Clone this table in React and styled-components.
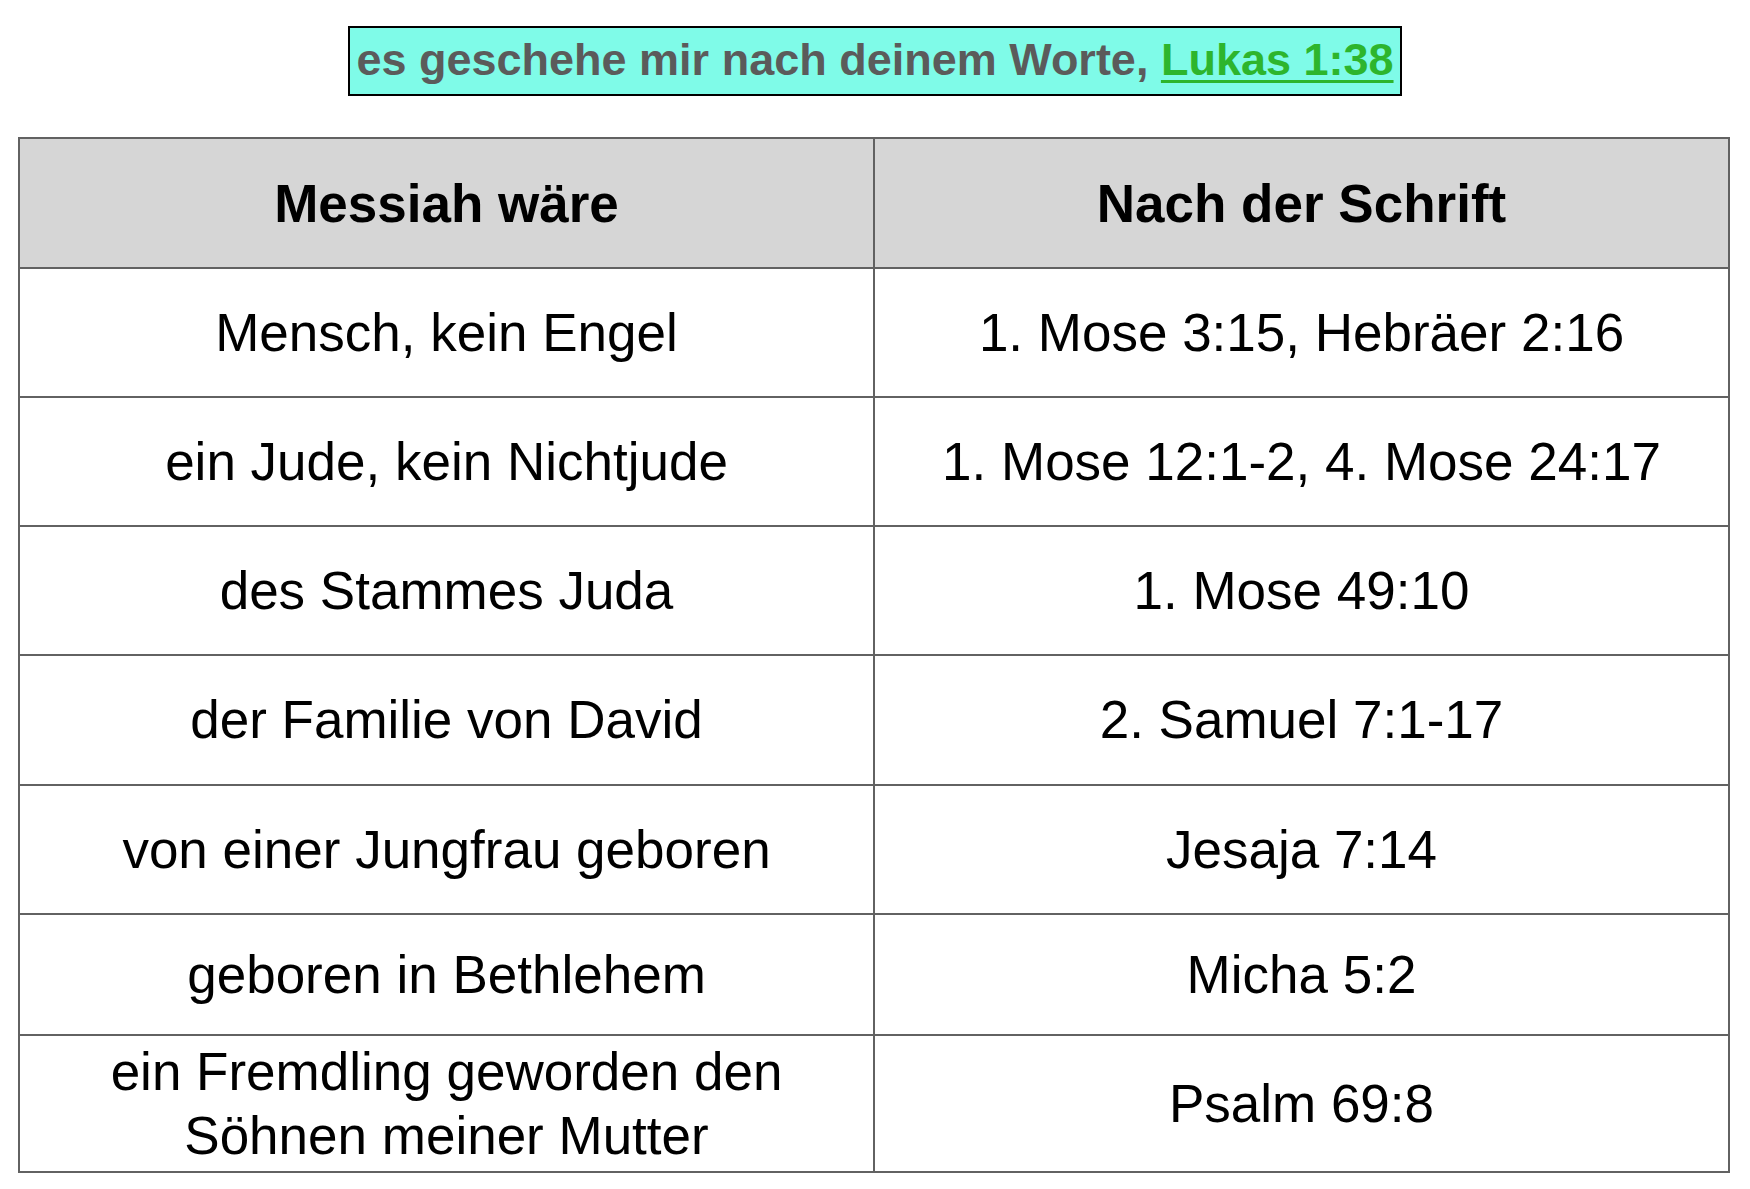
import React from 'react'
import styled, { createGlobalStyle } from 'styled-components'

const GlobalStyle = createGlobalStyle`
  html, body {
    margin: 0;
    padding: 0;
    background: #ffffff;
  }
  body {
    font-family: "Liberation Sans", Arial, Helvetica, sans-serif;
  }
`

const Page = styled.div`
  width: 1750px;
  box-sizing: border-box;
  padding: 26px 20px 18px 18px;
  display: flex;
  flex-direction: column;
  align-items: center;
`

const Banner = styled.div`
  box-sizing: border-box;
  width: 1054px;
  height: 70px;
  margin-left: 2px;
  border: 2px solid #000;
  background: #7ffbe8;
  color: #5b5b5b;
  font-weight: bold;
  font-size: 45px;
  line-height: 64px;
  text-align: center;
  white-space: nowrap;
`

const Ref = styled.a`
  color: #2db52d;
  text-decoration: underline;
  text-decoration-thickness: 3px;
  text-underline-offset: 5px;
`

const Table = styled.table`
  margin-top: 41px;
  width: 1712px;
  border-collapse: collapse;
  table-layout: fixed;
`

const HeadCell = styled.th`
  height: 128px;
  padding: 0;
  background: #d6d6d6;
  border: 2px solid #626262;
  font-size: 53px;
  font-weight: bold;
  color: #000;
  text-align: center;
  vertical-align: middle;
`

const Cell = styled.td`
  height: ${p => p.$h}px;
  padding: 0;
  border: 2px solid #626262;
  font-size: 53px;
  line-height: 64px;
  color: #000;
  text-align: center;
  vertical-align: middle;
`

const rows = [
  { left: 'Mensch, kein Engel', right: '1. Mose 3:15, Hebräer 2:16', h: 127 },
  { left: 'ein Jude, kein Nichtjude', right: '1. Mose 12:1-2, 4. Mose 24:17', h: 127 },
  { left: 'des Stammes Juda', right: '1. Mose 49:10', h: 127 },
  { left: 'der Familie von David', right: '2. Samuel 7:1-17', h: 128 },
  { left: 'von einer Jungfrau geboren', right: 'Jesaja 7:14', h: 127 },
  { left: 'geboren in Bethlehem', right: 'Micha 5:2', h: 119 },
  { left: ['ein Fremdling geworden den', 'Söhnen meiner Mutter'], right: 'Psalm 69:8', h: 135 },
]

export default function App() {
  return (
    <>
      <GlobalStyle />
      <Page>
        <Banner>
          es geschehe mir nach deinem Worte, <Ref href="#">Lukas 1:38</Ref>
        </Banner>
        <Table>
          <colgroup>
            <col style={{ width: '50%' }} />
            <col style={{ width: '50%' }} />
          </colgroup>
          <thead>
            <tr>
              <HeadCell>Messiah wäre</HeadCell>
              <HeadCell>Nach der Schrift</HeadCell>
            </tr>
          </thead>
          <tbody>
            {rows.map((r, i) => (
              <tr key={i}>
                <Cell $h={r.h}>
                  {Array.isArray(r.left)
                    ? r.left.map((l, j) => <div key={j}>{l}</div>)
                    : r.left}
                </Cell>
                <Cell $h={r.h}>{r.right}</Cell>
              </tr>
            ))}
          </tbody>
        </Table>
      </Page>
    </>
  )
}
